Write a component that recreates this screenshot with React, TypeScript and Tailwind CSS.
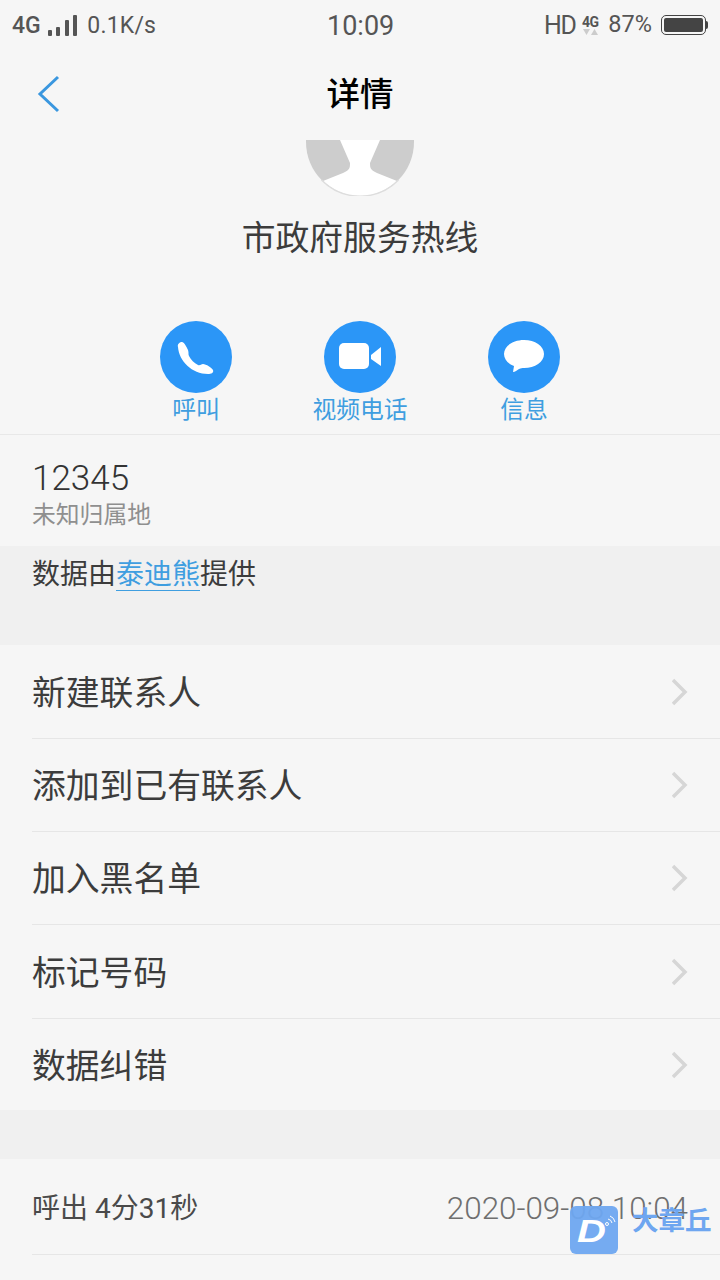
const font = "font-['Roboto','Noto_Sans_CJK_SC',sans-serif]";

const rows = ["新建联系人", "添加到已有联系人", "加入黑名单", "标记号码", "数据纠错"];
// the source rows are not all the same height
const rowHeights = ["h-[93px]", "h-[93px]", "h-[93px]", "h-[94px]", "h-[91px]"];

function Signal() {
  return (
    <div className="flex items-end gap-[4.5px] h-[21px] ml-[7px]">
      <div className="w-[4px] h-[6px] bg-[#555] rounded-[1px]" />
      <div className="w-[4px] h-[9px] bg-[#555] rounded-[1px]" />
      <div className="w-[4px] h-[16px] bg-[#555] rounded-[1px]" />
      <div className="w-[4px] h-[21px] bg-[#555] rounded-[1px]" />
    </div>
  );
}

function Battery() {
  return (
    <div className="flex items-center ml-[9px]">
      <div className="w-[45px] h-[20px] border-[1.5px] border-[#444] rounded-[5px] p-[2px]">
        <div className="w-full h-full bg-[#444] rounded-[2px]" />
      </div>
      <div className="w-[2px] h-[8px] bg-[#444] rounded-r-[2px]" />
    </div>
  );
}

function StatusBar() {
  return (
    <div className="relative h-[50px] flex items-center justify-between pl-[12px] pr-[12px] text-[#555]">
      <div className="flex items-center">
        <span className="text-[23px] font-medium leading-none">4G</span>
        <Signal />
        <span className="ml-[10px] text-[23px] leading-none tracking-[0.2px]">0.1K/s</span>
      </div>
      <span className="absolute left-[327px] top-[10px] text-[27px] leading-[32px]">10:09</span>
      <div className="flex items-center">
        <span className="text-[25px] leading-none tracking-[-1.5px]">HD</span>
        <div className="flex flex-col items-center ml-[5px] w-[20px]">
          <span className="text-[14px] font-bold leading-[14px] tracking-[-0.5px]">4G</span>
          <div className="flex gap-[1px] h-[7px]">
            <svg width="7" height="6" viewBox="0 0 7 6"><path d="M0 0h7L3.5 6z" fill="#ccc" /></svg>
            <svg width="7" height="6" viewBox="0 0 7 6"><path d="M0 6h7L3.5 0z" fill="#ccc" /></svg>
          </div>
        </div>
        <span className="ml-[8px] text-[23.5px] leading-none">87%</span>
        <Battery />
      </div>
    </div>
  );
}

function TitleBar() {
  return (
    <div className="relative h-[90px] flex items-center justify-center">
      <svg className="absolute left-[37px] top-[25px]" width="24" height="38" viewBox="0 0 24 38" fill="none">
        <path d="M21 2 3 19l18 17" stroke="#3a97df" strokeWidth="3" />
      </svg>
      <span className="text-[33.5px] font-medium text-black leading-none">详情</span>
    </div>
  );
}

function Avatar() {
  return (
    <div className="h-[56px] flex justify-center overflow-hidden">
      <svg width="108" height="57" viewBox="0 0 108 57">
        <path d="M0 0h108v2a54 54 0 0 1-108 0z" fill="#cdcdcd" />
        <path
          d="M34 0 44 23c0 3 0 5-2 7-1 1-3 2-5 3L17 41a53 53 0 0 0 74 0L71 33c-2-1-4-2-5-3-2-2-2-4-2-7L74 0z"
          fill="#fff"
        />
        <path d="M15.500 40a54 54 0 0 0 77 0" fill="none" stroke="#dddddd" strokeWidth="1.500" />
      </svg>
    </div>
  );
}

function ActionButton({ label, children }: { label: string; children: React.ReactNode }) {
  return (
    <div className="w-[164px] flex flex-col items-center">
      <div className="w-[72px] h-[72px] rounded-full bg-[#2b96f7] flex items-center justify-center">
        {children}
      </div>
      <span className="text-[23.8px] leading-[34px] text-[#3f9ee0]">{label}</span>
    </div>
  );
}

function Actions() {
  return (
    <div className="flex justify-center h-[114px] border-b border-[#e8e8e8]">
      <ActionButton label="呼叫">
        <svg width="72" height="72" viewBox="0 0 72 72">
          <path
            d="M18 26C17 23 20 21 22 21C24 21 26 25 28 29C29 32 28 33 29 35C31 39 34 42 38 44C40 45 41 43 43 43C46 43 52 47 53 49C54 52 51 53 48 53C32 53 19 40 18 26Z"
            fill="#fff"
          />
        </svg>
      </ActionButton>
      <ActionButton label="视频电话">
        <svg width="44" height="30" viewBox="0 0 44 30">
          <rect x="1" y="1" width="30" height="26" rx="5" fill="#fff" />
          <path d="M33 13 43 5v19l-10-7z" fill="#fff" />
        </svg>
      </ActionButton>
      <ActionButton label="信息">
        <svg width="42" height="38" viewBox="0 0 42 38">
          <path
            d="M21 2c11 0 20 6 20 14s-9 14-20 14c-2 0-3 0-5 1-2 1-4 3-6 3l1-6C5 26 1 21 1 16 1 8 10 2 21 2z"
            fill="#fff"
          />
        </svg>
      </ActionButton>
    </div>
  );
}

function ListRow({ label, height, last }: { label: string; height: string; last: boolean }) {
  return (
    <div className="pl-[32px]">
      <div className={`${height} pt-[4px] flex items-center justify-between pr-[32px] ${last ? "" : "border-b border-[#e6e6e6]"}`}>
        <span className="text-[33.8px] leading-none text-[#3c3c3c]">{label}</span>
        <svg className="-mt-[4px]" width="16" height="28" viewBox="0 0 16 28" fill="none">
          <path d="M1 2l12 12L1 26" stroke="#d6d6d6" strokeWidth="3.500" />
        </svg>
      </div>
    </div>
  );
}

export default function App() {
  return (
    <div className={`relative w-[720px] h-[1280px] overflow-hidden bg-[#f6f6f6] ${font}`}>
      <StatusBar />
      <TitleBar />
      <Avatar />
      <div className="h-[84px] pt-[23px] text-center text-[33.800px] leading-[40px] text-[#3c3c3c]">市政府服务热线</div>
      <div className="h-[41px]" />
      <Actions />
      <div className="h-[111px] pl-[32px] pt-[25px]">
        <div className="text-[35px] font-light leading-[38px] text-[#333]">12345</div>
        <div className="text-[23.8px] leading-[34px] text-[#8f8f8f]">未知归属地</div>
      </div>
      <div className="h-[99px] bg-[#f0f0f0] pl-[32px] pt-[11px] text-[28px] leading-[36px] text-[#3c3c3c]">
        数据由<span className="text-[#3f9ee0] border-b border-[#3f9ee0] inline-block leading-[30px]">泰迪熊</span>提供
      </div>
      <div className="pt-[1px]">
        {rows.map((r, i) => (
          <ListRow key={r} label={r} height={rowHeights[i]} last={i === rows.length - 1} />
        ))}
      </div>
      <div className="h-[49px] bg-[#f0f0f0]" />
      <div className="pl-[32px]">
        <div className="h-[96px] pt-[4px] flex items-center justify-between pr-[32px] border-b border-[#e6e6e6]">
          <span className="text-[28px] leading-none text-[#4a4a4a]">呼出 4分31秒</span>
          <span className="text-[31.4px] font-light leading-none text-[#6f6f6f]">2020-09-08 10:04</span>
        </div>
      </div>
      {/* watermark */}
      <div className="absolute left-[570px] top-[1206px] flex items-start">
        <div className="relative w-[48px] h-[48px] rounded-[6px] bg-[#6ea6f0]/95 flex items-center justify-center">
          <span className="text-[32px] font-bold italic text-white leading-none mr-[4px] mt-[1px] scale-x-125 font-['Liberation_Sans',sans-serif]">D</span>
          <svg className="absolute right-[2px] top-[9px]" width="12" height="12" viewBox="0 0 12 12" fill="none" stroke="#fff" strokeWidth="1">
            <circle cx="3" cy="9" r="1.500" />
            <path d="M4 4a5 5 0 0 1 4 4M6 1a8 8 0 0 1 5 6" />
          </svg>
        </div>
        <span className="ml-[14px] text-[26.5px] font-bold leading-[30px] text-[#6ea6f0]">大章丘</span>
      </div>
    </div>
  );
}
